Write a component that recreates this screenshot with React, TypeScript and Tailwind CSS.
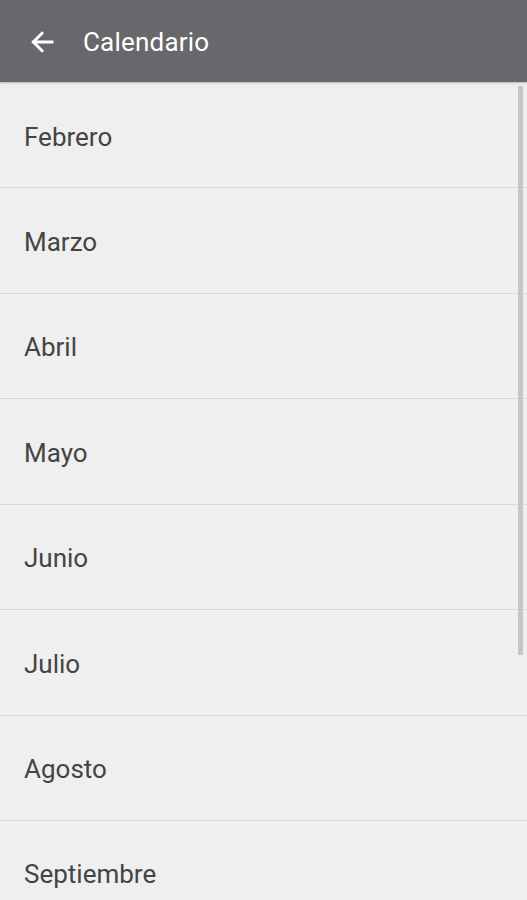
import React from "react";

const months = ["Febrero", "Marzo", "Abril", "Mayo", "Junio", "Julio", "Agosto", "Septiembre"];
const heights = [103, 105, 104, 105, 104, 105, 104, 104];

export default function App() {
  return (
    <div
      className="relative h-[900px] w-[527px] overflow-hidden bg-[#efefef]"
      style={{ fontFamily: "Roboto, 'Noto Sans', sans-serif" }}
    >
      <header className="flex h-[82px] items-center bg-[#68676c] pt-[2px] shadow-[0_1px_2px_rgba(0,0,0,0.25)]">
        <svg viewBox="0 0 24 24" className="ml-[26px] h-[32px] w-[32px]" fill="none" stroke="white" strokeWidth="2.2" strokeLinecap="square">
          <path d="M19.5 12H5.5M12 5.5L5.5 12l6.5 6.5" />
        </svg>
        <h1 className="ml-[25px] text-[26px] font-normal tracking-[0.2px] text-white">Calendario</h1>
      </header>
      <div className="mt-[2px]">
        {months.map((m, i) => (
          <div
            key={m}
            className="flex items-center border-b border-[#d9d9d9] pl-[24px] pt-[3px] text-[26px] text-[#444444]"
            style={{ height: heights[i] + 1 }}
          >
            {m}
          </div>
        ))}
      </div>
      {/* scrollbar */}
      <div className="absolute left-[518px] top-[86px] h-[569px] w-[5px] bg-[#c6c6c6]" />
    </div>
  );
}
